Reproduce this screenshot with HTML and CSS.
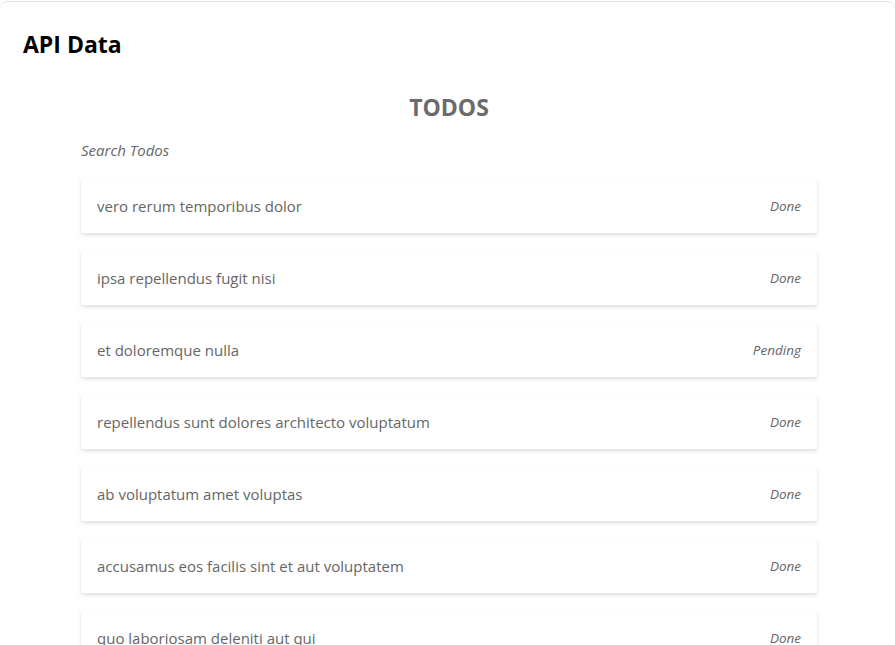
FILE: index.html
```html
<!DOCTYPE html>
<html>
<head>
<meta charset="utf-8">
<link rel="stylesheet" href="styles.css">
</head>
<body>
<div class="frame">
  <h1 class="app-title">API Data</h1>
  <section class="todos">
    <h2 class="todos-title">TODOS</h2>
    <div class="search">Search Todos</div>
    <ul class="list">
      <li class="card"><span class="name">vero rerum temporibus dolor</span><span class="status">Done</span></li>
      <li class="card"><span class="name">ipsa repellendus fugit nisi</span><span class="status">Done</span></li>
      <li class="card"><span class="name">et doloremque nulla</span><span class="status">Pending</span></li>
      <li class="card"><span class="name">repellendus sunt dolores architecto voluptatum</span><span class="status">Done</span></li>
      <li class="card"><span class="name">ab voluptatum amet voluptas</span><span class="status">Done</span></li>
      <li class="card"><span class="name">accusamus eos facilis sint et aut voluptatem</span><span class="status">Done</span></li>
      <li class="card"><span class="name">quo laboriosam deleniti aut qui</span><span class="status">Done</span></li>
    </ul>
  </section>
</div>
</body>
</html>
```
FILE: styles.css
```css
html, body {
  margin: 0;
  padding: 0;
  background: #fff;
  overflow: hidden;
}
body {
  font-family: "Open Sans", "Noto Sans", sans-serif;
  color: #666;
  padding-top: 1px;
}
.frame {
  border-top: 1px solid #e3e3e3;
  border-radius: 8px 8px 0 0;
  height: 700px;
  box-sizing: border-box;
  padding: 0 23px;
}
.app-title {
  margin: 0;
  padding-top: 27px;
  font-size: 23px;
  line-height: 30px;
  font-weight: 700;
  color: #000;
}
.todos {
  width: 736px;
  margin: 0 0 0 58px;
}
.todos-title {
  margin: 32px 0 0;
  text-align: center;
  font-size: 23px;
  line-height: 32px;
  font-weight: 700;
  color: #6b6b6b;
}
.search {
  margin-top: 17px;
  font-size: 15px;
  line-height: 20px;
  font-style: italic;
  color: #666;
}
.list {
  list-style: none;
  margin: 18px 0 0;
  padding: 0;
  display: flex;
  flex-direction: column;
  gap: 17px;
}
.card {
  height: 55px;
  display: flex;
  align-items: center;
  justify-content: space-between;
  padding: 0 16px;
  background: #fff;
  box-shadow: 0 2px 4px rgba(0,0,0,0.13);
}
.name {
  font-size: 15px;
  color: #666;
}
.status {
  font-size: 13.5px;
  font-style: italic;
  color: #666;
}
```
